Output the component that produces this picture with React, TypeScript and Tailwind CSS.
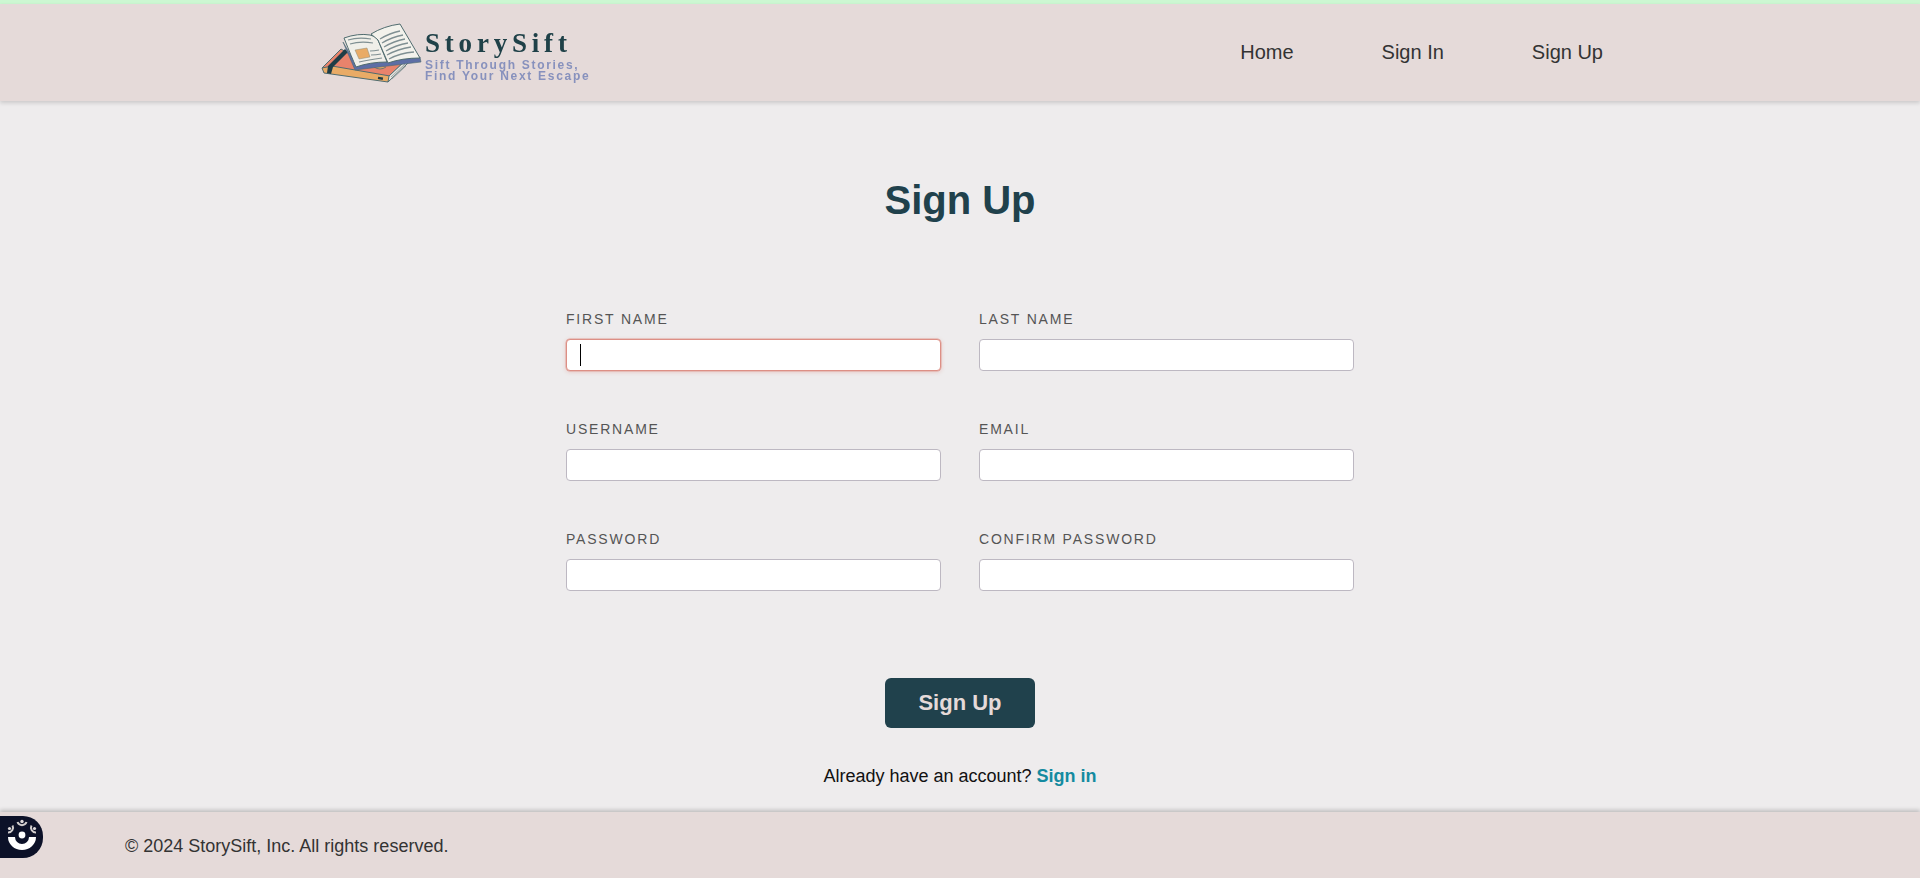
const fields = [
  ["FIRST NAME", "LAST NAME"],
  ["USERNAME", "EMAIL"],
  ["PASSWORD", "CONFIRM PASSWORD"],
];

function Logo() {
  return (
    <div className="flex items-start w-[280px] h-[66px]">
      <svg width="110" height="66" viewBox="0 0 110 66" className="shrink-0 blur-[0.4px]">
        <path d="M4 48 L23 29 L45 42 L88 40 L70 57 Z" fill="#e8836c" stroke="#4f6b6e" strokeWidth="1" />
        <path d="M4 48 L6 53 L70 62 L72 56 L14 46 Z" fill="#e9ab66" stroke="#4f6b6e" strokeWidth="1" />
        <path d="M70 62 L90 43 L87 41 L71 56 Z" fill="#e6e4de" stroke="#4f6b6e" strokeWidth="1" />
        <path d="M73 57 L87 44 M74 59 L88 46" stroke="#8b9a9c" strokeWidth="0.8" />
        <path d="M13 54 L15 47 L30 32 L27 29 L10 46 L9 53 Z" fill="#1f3d46" />
        <rect x="60" y="57" width="5" height="2.4" fill="#1f3d46" transform="rotate(10 62 58)" />
        <path d="M56 47 Q62 51 68 47" fill="#e9ab66" stroke="#4f6b6e" strokeWidth="0.8" />
        <path d="M25 22 L37 50 L70 46 L103 42 L102 37 L38 44 Z" fill="#5d6ea5" stroke="#4f6b6e" strokeWidth="0.6" />
        <path d="M26 18 Q40 13 52 15 Q58 16 60 20 L69 42 Q52 42 38 47 Q34 38 26 18 Z" fill="#f0efe9" stroke="#4f6b6e" strokeWidth="1" />
        <path d="M53 14 Q66 6 82 4 L102 38 Q84 38 70 43 L60 20 Z" fill="#f3f2ec" stroke="#4f6b6e" strokeWidth="1" />
        <path d="M62 19 Q72 13 82 11 M64 23 Q74 17 85 15 M66 27 Q76 21 87 19 M68 31 Q78 25 90 23 M69 35 Q80 29 93 27 M71 39 Q82 33 96 32" stroke="#7f8f92" strokeWidth="1.3" fill="none" />
        <path d="M30 20 Q40 17 53 19 M32 24 Q42 21 55 23 M52 31 Q56 31 61 30 M53 35 Q58 35 63 34 M41 42 Q50 40 64 38" stroke="#7f8f92" strokeWidth="1.2" fill="none" />
        <path d="M37 30 L49 28 L52 37 L41 39 Z" fill="#e9ab66" stroke="#8a8a78" strokeWidth="0.5" />
      </svg>
      <div className="mt-[11px] -ml-[3px] flex flex-col blur-[0.3px]">
        <span className="font-['Liberation_Serif',serif] font-bold text-[27px] leading-[24px] tracking-[4.8px] text-[#1f4148]">StorySift</span>
        <span className="mt-[5px] font-['Liberation_Sans',sans-serif] font-bold text-[12px] leading-[11px] tracking-[1.7px] text-[#8791bd] whitespace-nowrap">
          Sift Through Stories,
          <br />
          Find Your Next Escape
        </span>
      </div>
    </div>
  );
}

export default function App() {
  return (
    <div className="h-[878px] flex flex-col bg-[#eeeced] font-['Liberation_Sans',Arial,sans-serif] overflow-hidden">
      <div className="h-[4px] bg-[#ccf7d2] shrink-0" />
      <header className="relative z-10 h-[97px] shrink-0 bg-[#e5dad9] shadow-[0_2px_4px_rgba(0,0,0,0.15)] flex items-center justify-between pl-[318px] pr-[317px]">
        <Logo />
        <nav className="flex gap-[88px] text-[20px] text-[#333333] leading-[24px] -mt-[2px]">
          <a>Home</a>
          <a>Sign In</a>
          <a>Sign Up</a>
        </nav>
      </header>
      <main className="flex-1 flex flex-col items-center pt-[76px]">
        <h1 className="text-[40px] leading-[46px] font-bold text-[#20414c]">Sign Up</h1>
        <form className="mt-[88px] w-[788px] grid grid-cols-2 gap-x-[38px] gap-y-[50px]">
          {fields.flat().map((label, i) => (
            <div key={label} className="flex flex-col">
              <label className="text-[14px] leading-[16px] tracking-[1.8px] text-[#555555]">{label}</label>
              <div
                className={
                  i === 0
                    ? "relative mt-[12px] h-[32px] bg-white rounded-[4px] border border-[#dd8f85] shadow-[0_0_0_0.5px_#e0a59d,0_1px_4px_rgba(224,147,138,0.45)]"
                    : "relative mt-[12px] h-[32px] bg-white rounded-[4px] border border-[#bdb8c2]"
                }
              >
                {i === 0 && <span className="absolute left-[13px] top-[4px] w-px h-[22px] bg-black" />}
              </div>
            </div>
          ))}
        </form>
        <button className="mt-[87px] w-[150px] h-[50px] pb-[2px] rounded-[6px] bg-[#20414c] text-[#e5dad9] text-[22px] font-bold">Sign Up</button>
        <p className="mt-[36px] pt-[1px] text-[18px] leading-[22px] text-[#111111]">
          Already have an account? <a className="font-bold text-[#148aa0]">Sign in</a>
        </p>
      </main>
      <footer className="relative h-[66px] pt-[2px] shrink-0 bg-[#e5dad9] shadow-[0_-2px_4px_rgba(0,0,0,0.2)] flex items-center pl-[125px] text-[18px] text-[#333333]">
        <div className="absolute left-0 top-[4px] w-[43px] h-[42px] rounded-r-[20px] bg-[#0c1128]">
          <svg width="43" height="42" viewBox="0 0 43 42">
            <path d="M8 21 A14 13 0 0 0 36 21 L29 21 A7 7 0 0 1 15 21 Z" fill="#ffffff" />
            <circle cx="22" cy="19" r="3.4" fill="#ffffff" />
            <circle cx="22" cy="5.5" r="1.7" fill="#dedada" />
            <path d="M17.5 6 A4.8 4.8 0 0 0 26.5 6" stroke="#d2cece" strokeWidth="2" fill="none" />
            <circle cx="9.5" cy="12.5" r="1.6" fill="#dedada" />
            <path d="M8 10 A0 0 0 0 0 8 10 M8.5 15.5 A4.8 4.8 0 0 0 14 13.5 L13 9.5" stroke="#d2cece" strokeWidth="0" fill="none" />
            <path d="M12.5 9.5 A4.8 4.8 0 0 1 8 16.5" stroke="#d2cece" strokeWidth="2" fill="none" />
            <circle cx="34.5" cy="12.5" r="1.6" fill="#dedada" />
            <path d="M31.5 9.5 A4.8 4.8 0 0 0 36 16.5" stroke="#d2cece" strokeWidth="2" fill="none" />
          </svg>
        </div>
        <span>© 2024 StorySift, Inc. All rights reserved.</span>
      </footer>
    </div>
  );
}
